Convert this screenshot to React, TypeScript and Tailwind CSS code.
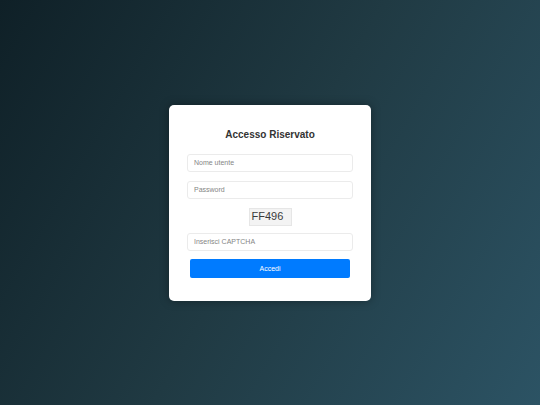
import React from "react";

export default function App() {
  return (
    <div
      className="w-[540px] h-[405px] flex items-center justify-center bg-[linear-gradient(120deg,#0f2027,#203a43,#2c5364)]"
      style={{ fontFamily: '"Liberation Sans", Arial, sans-serif' }}
    >
      <div className="w-[202px] bg-white rounded-[5px] shadow-[0_0_10px_rgba(0,0,0,0.35)] pt-[24px] px-[18px] pb-[23px] flex flex-col">
        <h2 className="text-[10px] leading-[12px] font-bold text-[#333] text-center mb-[13px]">
          Accesso Riservato
        </h2>
        <input
          className="h-[18px] w-full border border-[#ebebeb] rounded-[3px] px-[6px] text-[7px] text-[#333] placeholder:text-[#858585] outline-none"
          placeholder="Nome utente"
        />
        <input
          type="password"
          className="mt-[9px] h-[18px] w-full border border-[#ebebeb] rounded-[3px] px-[6px] text-[7px] text-[#333] placeholder:text-[#858585] outline-none"
          placeholder="Password"
        />
        <div className="mt-[9px] flex justify-center">
          <div className="w-[43px] h-[18px] bg-[#f3f3f3] border border-[#e6e6e6] pl-[2px] flex items-center text-[11px] leading-none text-[#3a3a3a]">
            FF496
          </div>
        </div>
        <input
          className="mt-[7px] h-[18px] w-full border border-[#ebebeb] rounded-[3px] px-[6px] text-[7px] text-[#333] placeholder:text-[#858585] outline-none"
          placeholder="Inserisci CAPTCHA"
        />
        <button className="mt-[8px] mx-[3px] h-[19px] bg-[#007bff] rounded-[2px] text-white text-[7px] leading-none flex items-center justify-center">
          Accedi
        </button>
      </div>
    </div>
  );
}
